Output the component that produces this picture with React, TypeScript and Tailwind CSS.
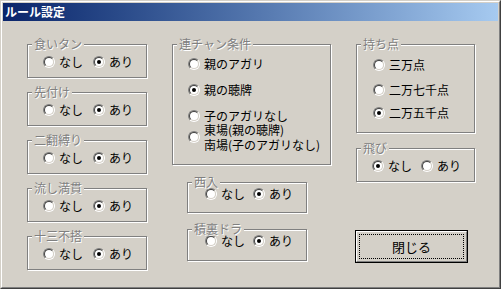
import React from 'react';

const JP = "font-['Noto_Sans_CJK_JP',sans-serif]";

interface RadioProps {
  checked?: boolean;
  label: React.ReactNode;
  className?: string;
  multiline?: boolean;
}

// classic sunken radio circle, 12x12
const RadioCircle: React.FC<{ checked?: boolean }> = ({ checked }) => (
  <span className="block w-[12px] h-[12px] shrink-0 rounded-full border border-t-[#808080] border-l-[#808080] border-r-white border-b-white">
    <span className="flex w-full h-full items-center justify-center rounded-full border border-t-[#404040] border-l-[#404040] border-r-[#d4d0c8] border-b-[#d4d0c8] bg-white">
      {checked && <span className="block w-[4px] h-[4px] rounded-full bg-black" />}
    </span>
  </span>
);

const Radio: React.FC<RadioProps> = ({ checked, label, className = '', multiline }) => (
  <div className={`flex items-center ${className}`}>
    <RadioCircle checked={checked} />
    <span
      className={`ml-[4px] text-[12px] text-black whitespace-nowrap ${multiline ? 'leading-[15px]' : 'leading-[12px]'}`}
    >
      {label}
    </span>
  </div>
);

const GroupBox: React.FC<{ label: string; className?: string; children: React.ReactNode }> = ({
  label,
  className = '',
  children,
}) => (
  <div className={`relative border border-[#808080] shadow-[1px_1px_0_#fff,inset_1px_1px_0_#fff] ${className}`}>
    {/* legend sits over the top line */}
    <span className="absolute left-[4px] top-[-6px] bg-[#d4d0c8] px-[2px] text-[12px] leading-[10px] text-[#808080] [text-shadow:1px_1px_0_#fff] whitespace-nowrap">
      {label}
    </span>
    {children}
  </div>
);

// the five yes/no groups down the left side
const leftGroups = ['食いタン', '先付け', '二翻縛り', '流し満貫', '十三不搭'];

export default function App() {
  return (
    <div className={`w-[501px] h-[289px] border border-t-[#d4d0c8] border-l-[#d4d0c8] border-r-[#404040] border-b-[#404040] ${JP}`}>
      <div className="h-full border border-t-white border-l-white border-r-[#808080] border-b-[#808080] bg-[#d4d0c8] p-[1px]">
        {/* title bar */}
        <div className="h-[18px] flex items-center pl-[2px] bg-gradient-to-r from-[#0a246a] to-[#a6caf0]">
          <span className="text-[12px] leading-[14px] font-bold text-white">ルール設定</span>
        </div>

        {/* client area */}
        <div className="h-[265px] flex pl-[24px] pt-[23px]">
          {/* left column */}
          <div className="w-[120px] flex flex-col gap-[14px]">
            {leftGroups.map((name) => (
              <GroupBox key={name} label={name} className="h-[34px] flex items-center pl-[15px] pt-[1px]">
                <Radio label="なし" className="w-[50px]" />
                <Radio label="あり" checked />
              </GroupBox>
            ))}
          </div>

          {/* middle column */}
          <div className="ml-[25px] w-[159px] flex flex-col">
            <GroupBox label="連チャン条件" className="h-[121px] flex flex-col pl-[15px] pt-[12px]">
              <Radio label="親のアガリ" className="h-[14px]" />
              <Radio label="親の聴牌" checked className="h-[14px] mt-[12px]" />
              <Radio label="子のアガリなし" className="h-[14px] mt-[12px]" />
              <Radio
                multiline
                label={
                  <>
                    東場(親の聴牌)
                    <br />
                    南場(子のアガリなし)
                  </>
                }
                className="h-[30px] -mt-[1px]"
              />
            </GroupBox>

            <GroupBox label="西入" className="ml-[15px] mt-[17px] w-[120px] h-[31px] flex items-start pl-[17px] pt-[4px]">
              <Radio label="なし" className="w-[48px] h-[14px]" />
              <Radio label="あり" checked className="h-[14px]" />
            </GroupBox>

            <GroupBox label="積裏ドラ" className="ml-[15px] mt-[16px] w-[120px] h-[32px] flex items-start pl-[17px] pt-[4px]">
              <Radio label="なし" className="w-[48px] h-[14px]" />
              <Radio label="あり" checked className="h-[14px]" />
            </GroupBox>
          </div>

          {/* right column */}
          <div className="ml-[25px] w-[119px] flex flex-col">
            <GroupBox label="持ち点" className="h-[89px] flex flex-col pl-[16px] pt-[13px]">
              <Radio label="三万点" className="h-[14px]" />
              <Radio label="二万七千点" className="h-[14px] mt-[11px]" />
              <Radio label="二万五千点" checked className="h-[14px] mt-[9px]" />
            </GroupBox>

            <GroupBox label="飛び" className="mt-[15px] h-[34px] flex items-center pl-[15px] pt-[1px]">
              <Radio label="なし" checked className="w-[49px]" />
              <Radio label="あり" />
            </GroupBox>

            {/* default push button with focus rect */}
            <div className="mt-[48px] -ml-[1px] w-[113px] h-[33px] border border-black">
              <div className="h-full border border-t-white border-l-white border-r-[#808080] border-b-[#808080] p-[2px]">
                <div className="h-full flex items-center justify-center border border-dotted border-black text-[13px] leading-[15px] text-black">
                  閉じる
                </div>
              </div>
            </div>
          </div>
        </div>
      </div>
    </div>
  );
}
